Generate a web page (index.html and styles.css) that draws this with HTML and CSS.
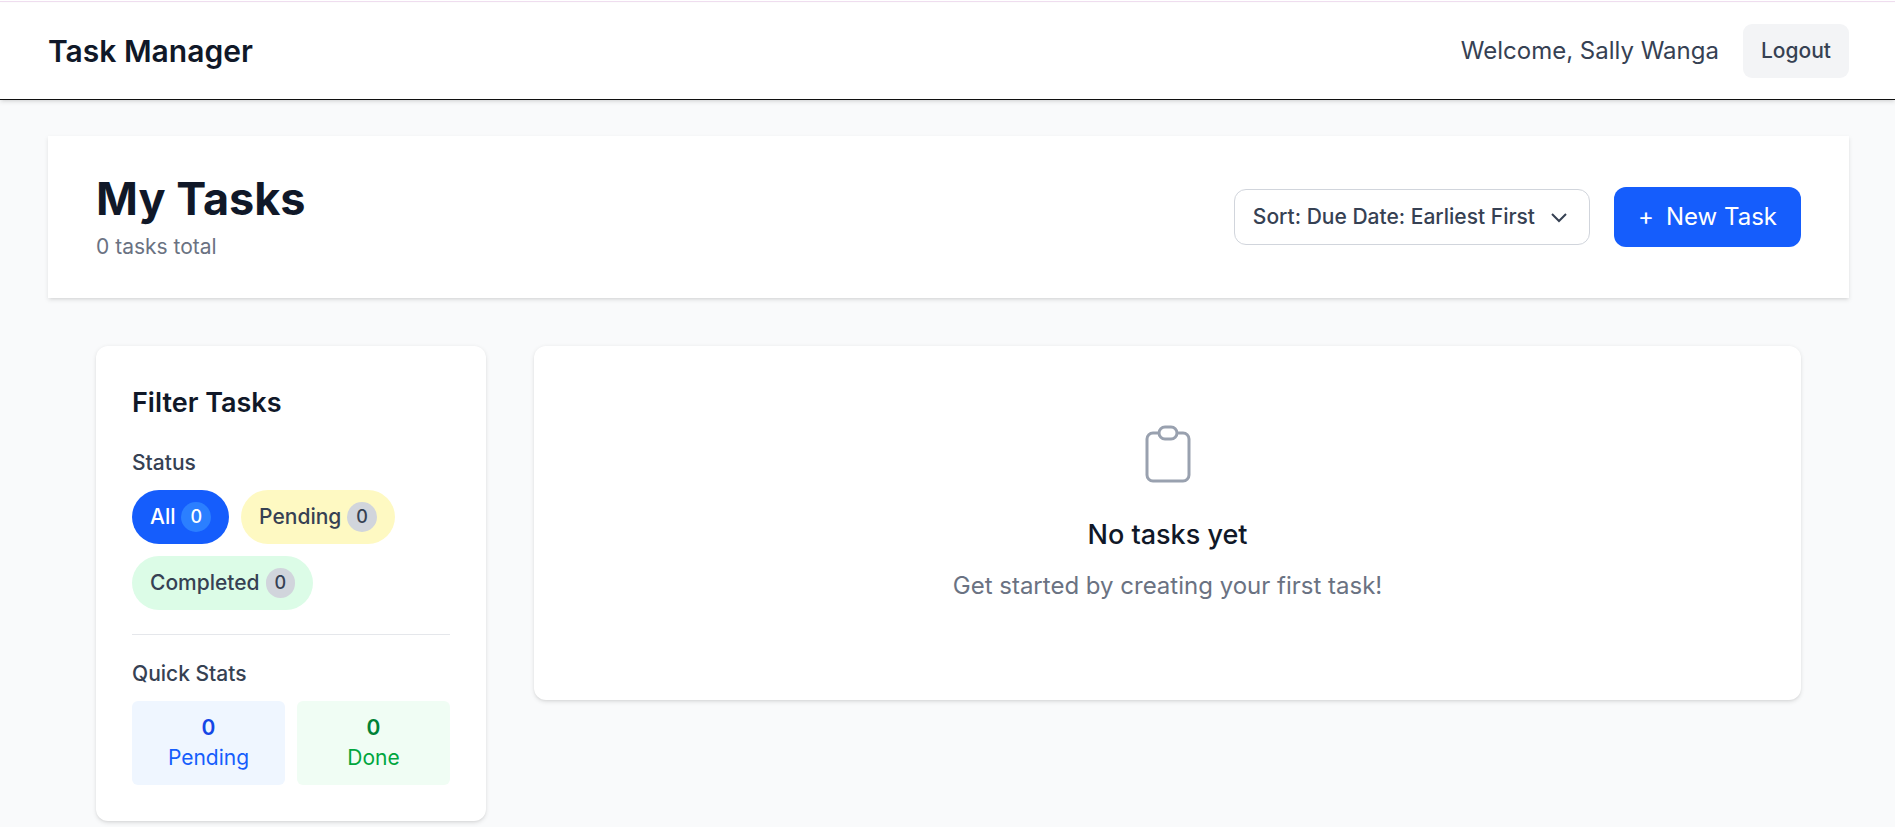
FILE: index.html
```html
<!DOCTYPE html>
<html lang="en">
<head>
<meta charset="utf-8">
<title>Task Manager</title>
<link rel="stylesheet" href="styles.css">
</head>
<body>
<div class="top-line"></div>
<header class="header">
  <span class="brand">Task Manager</span>
  <div class="account">
    <span class="welcome">Welcome, Sally Wanga</span>
    <button class="logout">Logout</button>
  </div>
</header>
<main class="main">
  <section class="page-head">
    <div>
      <h1 class="title">My Tasks</h1>
      <p class="subtitle">0 tasks total</p>
    </div>
    <div class="actions">
      <button class="sort"><span>Sort: Due Date: Earliest First</span>
        <svg class="chevron" viewBox="0 0 24 24" fill="none" stroke="currentColor" stroke-width="2"><path d="M19 9l-7 7-7-7"/></svg>
      </button>
      <button class="new-task"><span class="plus">+</span><span>New Task</span></button>
    </div>
  </section>
  <div class="columns">
    <aside class="card filters">
      <h2 class="filters-title">Filter Tasks</h2>
      <h3 class="label">Status</h3>
      <div class="pills">
        <button class="pill pill-all">All<span class="count">0</span></button>
        <button class="pill pill-pending">Pending<span class="count">0</span></button>
        <button class="pill pill-completed">Completed<span class="count">0</span></button>
      </div>
      <div class="stats">
        <h3 class="label">Quick Stats</h3>
        <div class="stat-grid">
          <div class="stat stat-pending"><div class="stat-value">0</div><div>Pending</div></div>
          <div class="stat stat-done"><div class="stat-value">0</div><div>Done</div></div>
        </div>
      </div>
    </aside>
    <section class="card empty">
      <svg class="clipboard" viewBox="0 0 24 24" fill="none" stroke="currentColor" stroke-width="1" stroke-linecap="round" stroke-linejoin="round"><path d="M9 5H7a2 2 0 00-2 2v12a2 2 0 002 2h10a2 2 0 002-2V7a2 2 0 00-2-2h-2M9 5a2 2 0 002 2h2a2 2 0 002-2M9 5a2 2 0 012-2h2a2 2 0 012 2"/></svg>
      <h2 class="empty-title">No tasks yet</h2>
      <p class="empty-text">Get started by creating your first task!</p>
    </section>
  </div>
</main>
</body>
</html>
```
FILE: styles.css
```css
* { box-sizing: border-box; margin: 0; padding: 0; }
html, body { height: 100%; overflow: hidden; }
body { background: #f9fafb; color: #101828; font: 400 24px/36px Inter, sans-serif; }
button { font: inherit; color: inherit; border: 0; }
.top-line { height: 3px; background: linear-gradient(#fff 0 1px, #f0def0 1px 2px, #fff 2px); }
.header { display: flex; align-items: center; justify-content: space-between; height: 97px; padding: 0 46px 0 48px; background: #fff; border-bottom: 1px solid #101010; box-shadow: 0 1.5px 4.5px rgba(0,0,0,.1), 0 1.5px 3px -1.5px rgba(0,0,0,.1); }
.brand { font-size: 30px; font-weight: 600; line-height: 42px; }
.account { display: flex; align-items: center; gap: 24px; }
.welcome { color: #364153; }
.logout { height: 54px; padding: 0 18px; border-radius: 9px; background: #f3f4f6; color: #364153; font-size: 21px; font-weight: 500; line-height: 30px; }
.main { padding: 36px 46px 0 48px; }
.page-head { display: flex; align-items: center; justify-content: space-between; padding: 36px 48px; background: #fff; box-shadow: 0 1.5px 4.5px rgba(0,0,0,.1), 0 1.5px 3px -1.5px rgba(0,0,0,.1); }
.title { font-size: 45px; font-weight: 700; line-height: 54px; }
.subtitle { margin-top: 6px; color: #6a7282; font-size: 21px; line-height: 30px; }
.actions { display: flex; align-items: center; gap: 24px; }
.sort { display: flex; align-items: center; gap: 12px; height: 56px; padding: 0 18px; border: 1px solid #d1d5dc; border-radius: 12px; background: #fff; color: #364153; font-size: 21px; font-weight: 500; line-height: 30px; }
.chevron { width: 24px; height: 24px; }
.new-task { display: flex; align-items: center; gap: 12px; height: 60px; padding: 0 24px; border-radius: 12px; background: #155dfc; color: #fff; }
.columns { display: grid; grid-template-columns: 390px 1fr; align-items: start; gap: 48px; padding: 48px 48px 0; }
.card { background: #fff; border-radius: 12px; box-shadow: 0 1.5px 4.5px rgba(0,0,0,.1), 0 1.5px 3px -1.5px rgba(0,0,0,.1); }
.filters { padding: 36px; }
.filters-title { margin-bottom: 24px; font-size: 27px; font-weight: 600; line-height: 42px; }
.label { margin-bottom: 12px; color: #364153; font-size: 21px; font-weight: 500; line-height: 30px; }
.pills { display: flex; flex-wrap: wrap; gap: 12px; }
.pill { display: flex; align-items: center; gap: 6px; height: 54px; padding: 0 18px; border-radius: 27px; color: #364153; font-size: 21px; font-weight: 500; line-height: 30px; }
.count { padding: 3px 9px; border-radius: 15px; background: #d1d5dc; font-size: 18px; line-height: 24px; }
.pill-all { background: #155dfc; color: #fff; }
.pill-all .count { background: #2b7fff; }
.pill-pending { background: #fef9c2; }
.pill-completed { background: #dcfce7; }
.stats { margin-top: 24px; padding-top: 24px; border-top: 1px solid #e5e7eb; }
.stat-grid { display: grid; grid-template-columns: 1fr 1fr; gap: 12px; }
.stat { padding: 12px; border-radius: 6px; text-align: center; font-size: 21px; line-height: 30px; }
.stat-value { font-weight: 600; }
.stat-pending { background: #eff6ff; color: #155dfc; }
.stat-pending .stat-value { color: #1447e6; }
.stat-done { background: #f0fdf4; color: #00a63e; }
.stat-done .stat-value { color: #008236; }
.empty { display: flex; flex-direction: column; align-items: center; padding: 72px 72px 96px; }
.clipboard { width: 72px; height: 72px; margin-bottom: 24px; color: #99a1af; }
.empty-title { margin-bottom: 12px; font-size: 27px; font-weight: 500; line-height: 42px; }
.empty-text { color: #6a7282; }
```
